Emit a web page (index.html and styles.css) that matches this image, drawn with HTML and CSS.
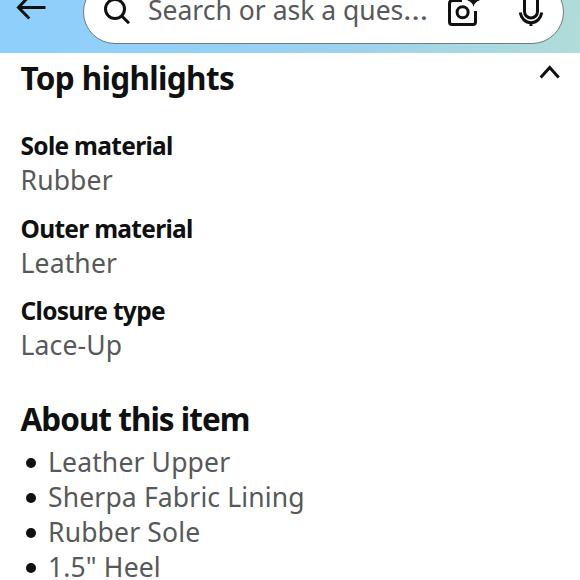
FILE: index.html
```
<!DOCTYPE html>
<html lang="en">
<head>
<meta charset="utf-8">
<title>Product details</title>
<link rel="stylesheet" href="styles.css">
</head>
<body>
<header class="topbar">
  <svg class="back" viewBox="0 0 32 30" aria-hidden="true"><path d="M30.5 15.500H3.500M14.300 4 3.500 15.500l10.800 11"/></svg>
  <div class="search">
    <svg class="lens" viewBox="0 0 30 30" aria-hidden="true"><circle cx="11" cy="13" r="9.500"/><path d="m17.500 19.800 7.500 7.500"/></svg>
    <span class="prompt">Search or ask a ques<span class="dots">…</span></span>
    <svg class="camera" viewBox="0 0 36 36" aria-hidden="true"><path d="M17 6.500H7.500q-3 0-3 3v18.500q0 2.500 2.500 2.500h21q2.500 0 2.500-2.500V17"/><circle cx="17.600" cy="18.200" r="5.500"/><path class="spark" d="M28.500 0q1 5.500 6.500 6.500-5.500 1-6.500 6.500-1-5.500-6.500-6.500 5.500-1 6.500-6.500Z"/></svg>
    <svg class="mic" viewBox="0 0 28 36" aria-hidden="true"><rect x="7.500" y="1.500" width="13" height="23.500" rx="6.500"/><path d="M3.200 19.500c1 6 5.300 10.300 10.800 10.300s9.800-4.300 10.800-10.300M14 30v3"/></svg>
  </div>
</header>
<main>
  <section>
    <div class="heading-row">
      <h2 class="top">Top highlights</h2>
      <svg class="chevron" viewBox="0 0 22 16" aria-hidden="true"><path d="m1.700 13.500 9-10 9 10"/></svg>
    </div>
    <dl>
      <div class="fact"><dt>Sole material</dt><dd>Rubber</dd></div>
      <div class="fact"><dt>Outer material</dt><dd>Leather</dd></div>
      <div class="fact"><dt>Closure type</dt><dd>Lace-Up</dd></div>
    </dl>
  </section>
  <section>
    <h2 class="about">About this item</h2>
    <ul>
      <li>Leather Upper</li>
      <li>Sherpa Fabric Lining</li>
      <li>Rubber Sole</li>
      <li>1.5" Heel</li>
    </ul>
  </section>
</main>
</body>
</html>
```
FILE: styles.css
```
* { box-sizing: border-box; }
html, body { height: 580px; overflow: hidden; }
body {
  margin: 0;
  background: #fff;
  color: #0f1111;
  font-family: "Noto Sans", sans-serif;
}
svg { display: block; flex: none; fill: none; stroke: #0f1111; stroke-width: 3; }
.topbar {
  display: flex;
  align-items: flex-end;
  height: 53px;
  padding: 0 16px 9px 15px;
  overflow: hidden;
  background: linear-gradient(100deg, #8ecffc 0%, #93d0f8 30%, #9dd2ef 60%, #a9d9e0 84%, #b0dcd9 100%);
}
.back { width: 32px; height: 30px; margin-bottom: 22px; }
.search {
  display: flex;
  align-items: center;
  width: 481px;
  height: 64px;
  margin-left: 36px;
  padding-left: 20px;
  border: 1px solid #6f7b80;
  border-radius: 32px;
  background: #fff;
}
.lens { width: 30px; height: 30px; margin-top: -2px; }
.prompt {
  width: 297px;
  margin: -4px 0 0 14px;
  color: #565959;
  font-size: 26.5px;
  line-height: 36px;
  letter-spacing: 0px;
  white-space: nowrap;
}
.dots { display: inline-block; transform: scaleX(1.2); transform-origin: left; }
.camera { width: 36px; height: 36px; margin-top: -1px; }
.camera .spark { fill: #0f1111; stroke: none; }
.mic { width: 28px; height: 36px; margin: -3px 0 0 36px; }
main { padding: 5px 19px 0 20.5px; }
h2, dl, dd, ul { margin: 0; padding: 0; }
.heading-row { display: flex; justify-content: space-between; }
h2 { font-size: 31.5px; line-height: 40px; font-weight: 700; white-space: nowrap; }
.top { letter-spacing: -0.65px; }
.about { margin-top: 22px; letter-spacing: -1px; }
.chevron { width: 22px; height: 16px; margin-top: 6px; }
dl { padding-top: 31px; }
.fact { height: 82.5px; }
dt { font-size: 24.5px; line-height: 34px; font-weight: 700; letter-spacing: -0.7px; }
dd, li { font-size: 26.5px; line-height: 35px; letter-spacing: 0.15px; color: #565959; }
ul { list-style: none; padding: 6px 0 0 5.5px; }
li { display: flex; align-items: center; height: 35px; }
li::before { content: ""; width: 10px; height: 10px; margin: 1px 12px 0 0; border-radius: 50%; background: #0f1111; }
```
